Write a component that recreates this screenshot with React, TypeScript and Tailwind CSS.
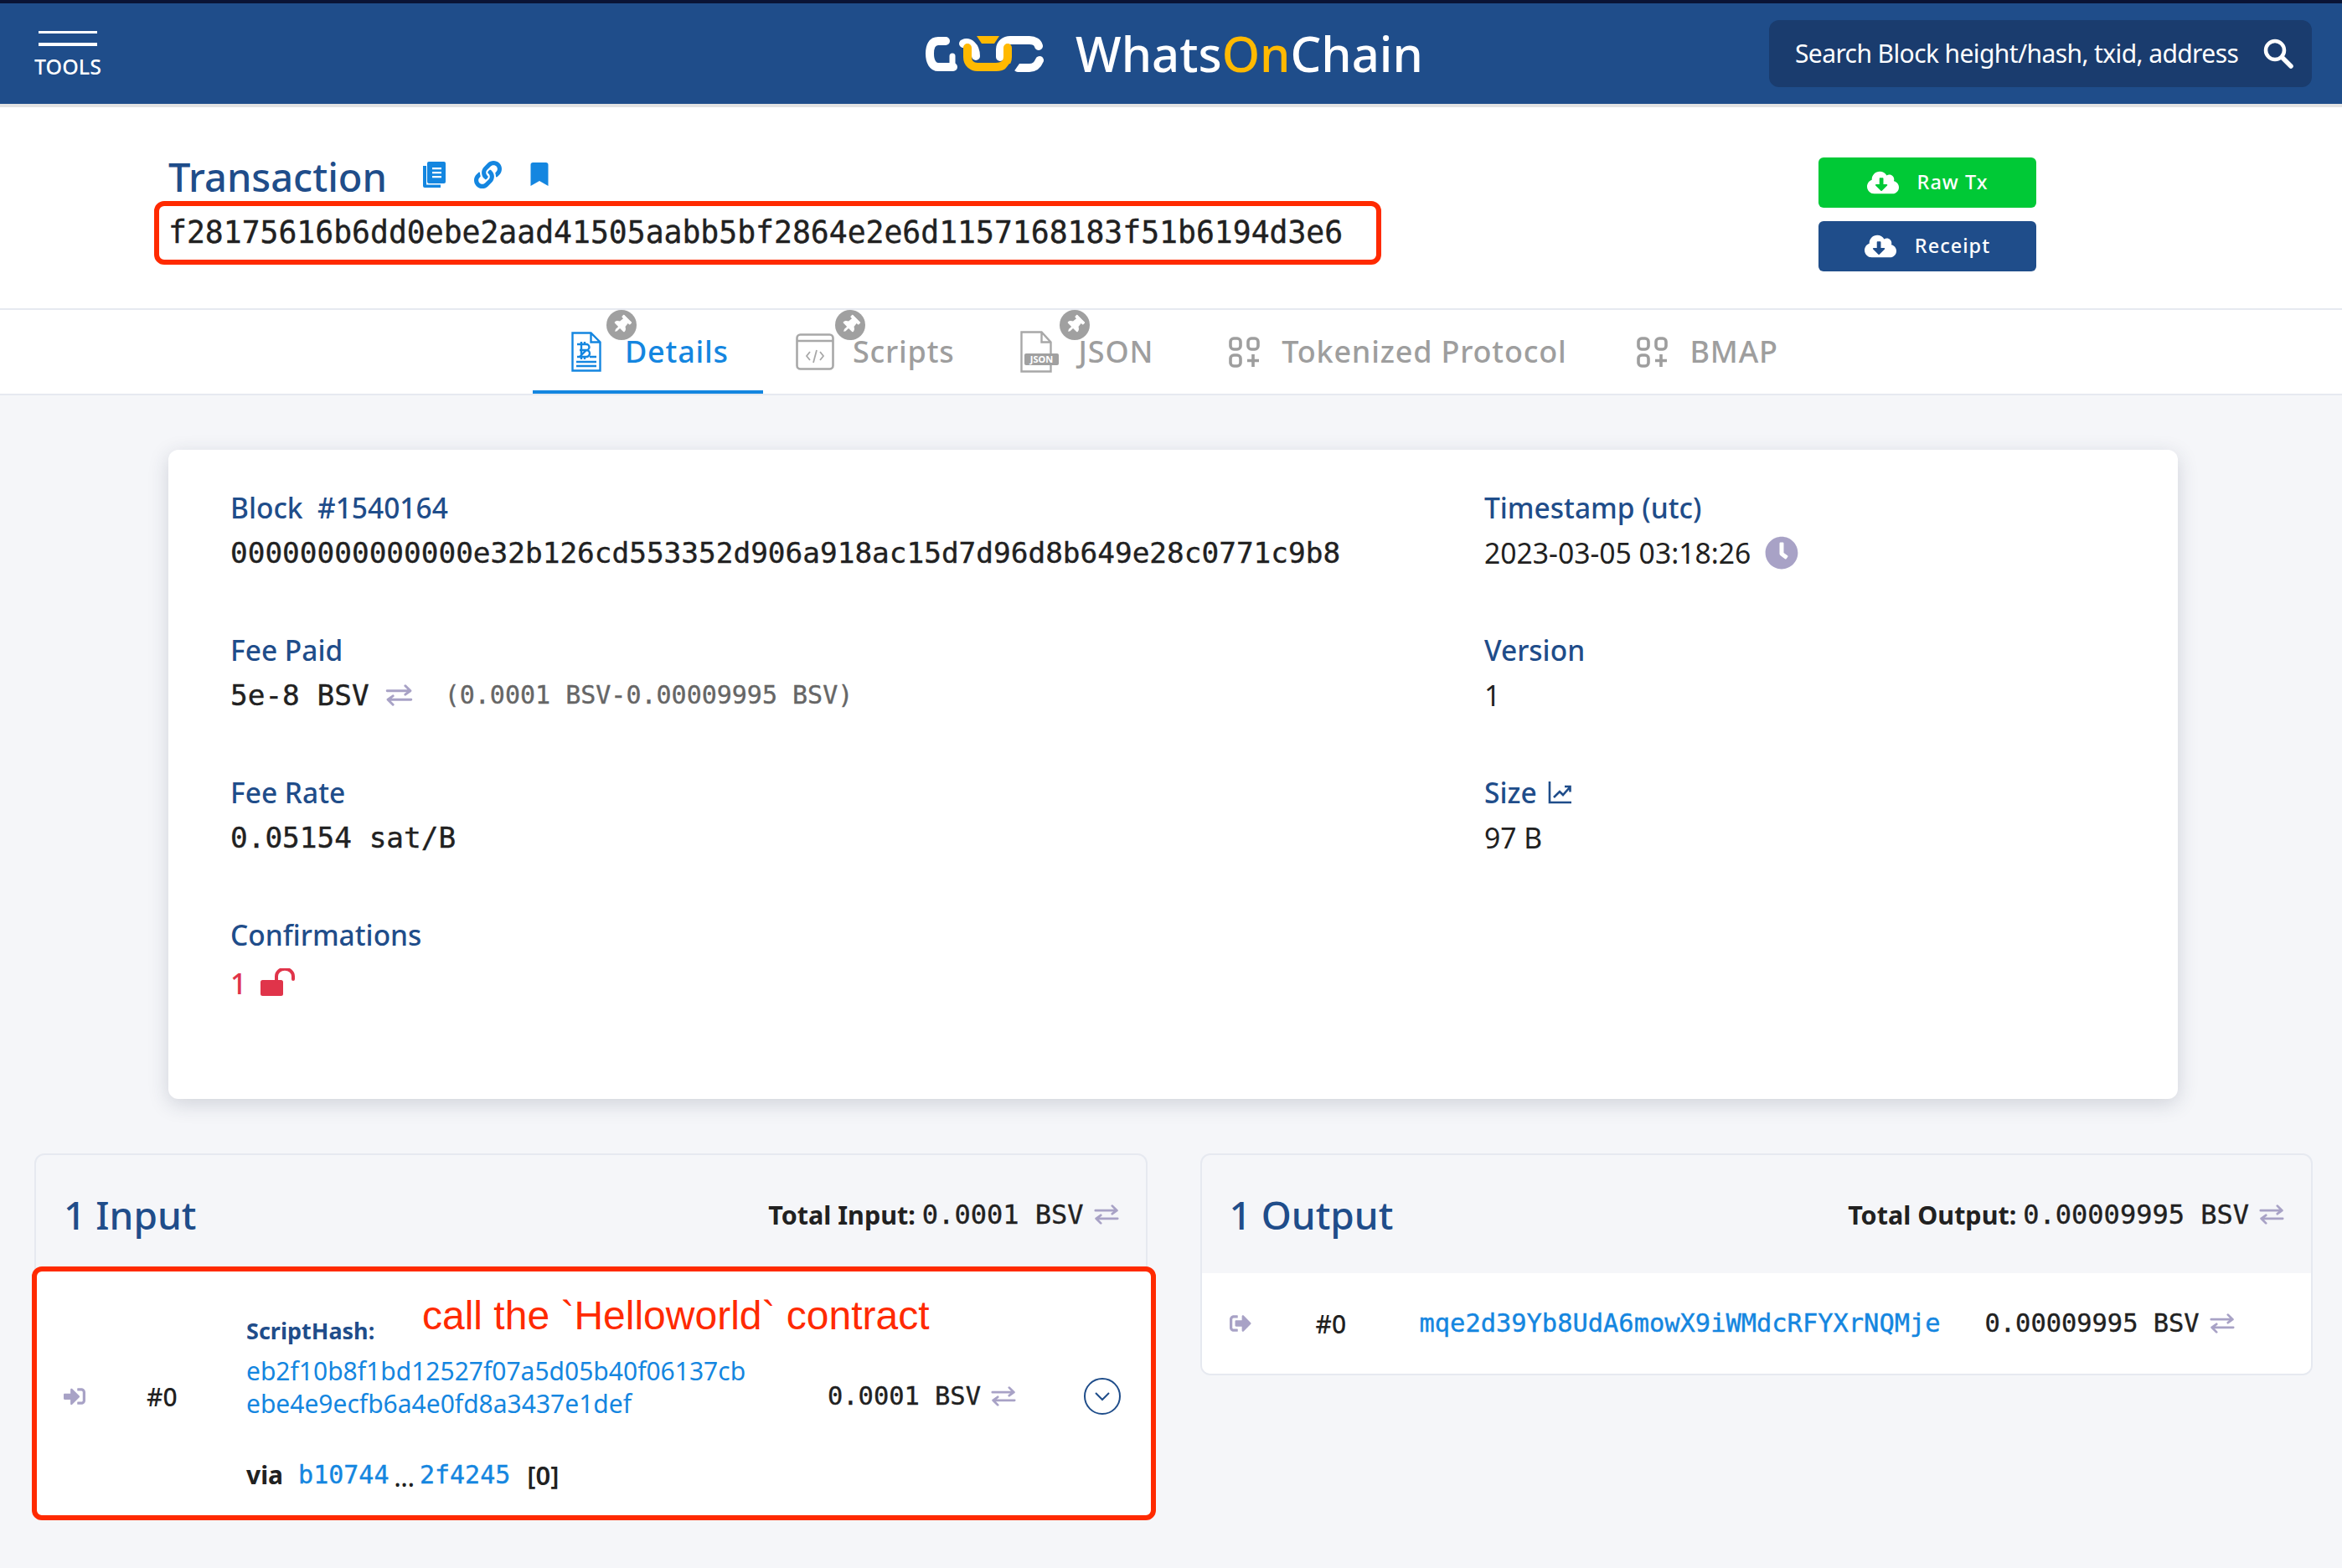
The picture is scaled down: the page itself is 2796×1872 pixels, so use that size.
import { FaBookmark, FaClock, FaCloudDownloadAlt, FaLink, FaSignInAlt, FaSignOutAlt, FaThumbtack } from "react-icons/fa";

const MONO = "font-['DejaVu_Sans_Mono',monospace] [-webkit-text-stroke:0.4px_currentColor]";

function Exchange({ className }: { className: string }) {
  return (
    <svg viewBox="0 0 37 30" fill="none" stroke="#a8a2c6" strokeWidth="3.4" strokeLinecap="round" strokeLinejoin="round" className={className}>
      <path d="M2 9h32M27 2l7 7-7 5" />
      <path d="M35 21H3M10 16l-7 5 7 7" />
    </svg>
  );
}

function CopyIcon() {
  return (
    <svg viewBox="0 0 28 32" className="w-[28px] h-[32px]" fill="#1486e0">
      <path d="M7 1a2 2 0 0 0-2 2v22a2 2 0 0 0 2 2h18a2 2 0 0 0 2-2V3a2 2 0 0 0-2-2z" />
      <path d="M0 6v24a2 2 0 0 0 2 2h19v-3.4H4V6z" />
      <path d="M11 8h11v2.2H11zM11 13h11v2.2H11zM11 18h11v2.2H11z" fill="#fff" />
    </svg>
  );
}

function Logo() {
  return (
    <svg viewBox="0 0 141 43" className="ml-[3px] w-[141px] h-[43px]" fill="none" strokeLinecap="round" strokeLinejoin="round">
      <g stroke="#fff" strokeWidth="10">
        <path d="M24 6H15C8 6 5 12 5 21C5 31 9 37 15 37H33" />
        <path d="M32 37V24" strokeWidth="7" />
        <path d="M45 9C52 6 60 12 60 24" />
        <path d="M89 25V16C89 9 95 5 101 5H124C130 5 134 8 135 12" />
        <path d="M110 38H124C130 38 134 34 136 29" />
      </g>
      <path d="M61 0H88L82 9H67Z" fill="#ffb900" />
      <path d="M50 15V26C50 34 56 38 62 38H84C92 38 98 34 98 26V15" transform="translate(0 -1)" stroke="#ffb900" strokeWidth="10" />
      <path d="M92 43H105L112 33H100Z" fill="#1f4d8a" />
    </svg>
  );
}

function Field({ label, children }: { label: React.ReactNode; children: React.ReactNode }) {
  return (
    <div className="h-[170px]">
      <div className="flex items-center gap-[13px] whitespace-pre text-[33.5px] leading-[40px] font-medium text-[#1f4d8a]">{label}</div>
      <div className="mt-[14px] flex items-center text-[33.7px] leading-[40px] text-[#212121]">{children}</div>
    </div>
  );
}

function Tab({ icon, label, pad, active, pin }: { icon: React.ReactNode; label: string; pad: string; active?: boolean; pin?: string }) {
  return (
    <div className={`relative flex h-[100px] items-center pt-[4px] border-b-[4px] ${pad} ${active ? "border-[#1486e0] text-[#1486e0]" : "border-transparent text-[#9e9e9e]"}`}>
      {icon}
      <span className="text-[36px] leading-[50px] font-medium tracking-[0.8px]">{label}</span>
      {pin && (
        <span className={`absolute top-0 flex h-[36px] w-[36px] items-center justify-center rounded-full bg-[#a0a0a0] text-white ${pin}`}>
          <FaThumbtack className="h-[22px] w-[22px] rotate-45" />
        </span>
      )}
    </div>
  );
}

function AppsIcon({ className }: { className: string }) {
  return (
    <svg viewBox="0 0 37 37" className={`h-[37px] w-[37px] ${className}`} fill="none" stroke="#9e9e9e" strokeWidth="3.6">
      <rect x="2" y="2" width="12" height="13" rx="4" />
      <rect x="23" y="2" width="12" height="13" rx="4" />
      <rect x="2" y="22" width="12" height="13" rx="4" />
      <path d="M29 21v15M22 28.500h14" />
    </svg>
  );
}

function PanelHead({ title, total, amount }: { title: string; total: string; amount: string }) {
  return (
    <div className="flex h-[141px] items-center justify-between pl-[33px] pr-[32px]">
      <h2 className="text-[46px] font-medium leading-[60px] text-[#1f4d8a]">{title}</h2>
      <div className="flex items-center text-[30.500px] leading-[40px] text-[#212121]">
        <span className="font-bold">{total}</span>
        <span className={`ml-[8px] ${MONO} text-[32px]`}>{amount}</span>
        <Exchange className="ml-[12px] h-[24px] w-[30px]" />
      </div>
    </div>
  );
}

export default function App() {
  return (
    <div className="min-h-[1872px] w-full bg-[#f5f6f9] font-['Noto_Sans',sans-serif]">
      {/* top bar */}
      <header className="grid h-[128px] grid-cols-[1fr_auto_1fr] items-center border-t-4 border-b-4 border-t-[#0a1435] border-b-[#e2e2e2] bg-[#1f4d8a] pl-[41px] pr-[36px] text-white">
        <div className="flex w-[80px] flex-col items-center">
          <div className="h-[3px] w-[70px] bg-white" />
          <div className="mt-[11px] h-[4px] w-[70px] bg-white" />
          <div className="mt-[11px] text-[25px] font-medium leading-[26px]">TOOLS</div>
        </div>
        <div className="flex items-center gap-[38px]">
          <Logo />
          <div className="text-[58px] leading-[70px] font-medium">
            Whats<span className="text-[#ffb900]">On</span>Chain
          </div>
        </div>
        <div className="flex justify-end">
          <div className="flex h-[80px] w-[648px] items-center justify-between rounded-[12px] bg-[#1a3c6e] pl-[31px] pr-[22px]">
            <span className="whitespace-nowrap pb-[2px] text-[30px] tracking-[-0.6px]">Search Block height/hash, txid, address</span>
            <svg viewBox="0 0 36 36" className="h-[36px] w-[36px]" fill="none" stroke="#fff" strokeLinecap="round">
              <circle cx="14" cy="14" r="11" strokeWidth="4.500" />
              <path d="M22.500 22.500L33 33" strokeWidth="5.500" />
            </svg>
          </div>
        </div>
      </header>

      {/* title */}
      <section className="flex h-[242px] items-start justify-between border-b-2 border-[#e6e9f0] bg-white pl-[201px] pr-[365px]">
        <div>
          <div className="mt-[54px] flex h-[58px] items-center">
            <h1 className="text-[47px] font-medium leading-[58px] text-[#1f4d8a]">Transaction</h1>
            <div className="ml-[43px] flex items-center gap-[33px] pb-[6px]">
              <CopyIcon />
              <FaLink className="h-[33px] w-[33px] text-[#1486e0]" />
              <FaBookmark className="h-[28px] w-[24px] text-[#1486e0]" />
            </div>
          </div>
          <div className={`-ml-[17px] flex h-[76px] w-[1465px] items-center rounded-[12px] border-[6px] border-[#ff2a00] pl-[11px] text-[36.4px] text-[#212121] ${MONO}`}>
            f28175616b6dd0ebe2aad41505aabb5bf2864e2e6d1157168183f51b6194d3e6
          </div>
        </div>
        <div className="mt-[60px] flex w-[260px] flex-col gap-[16px] text-[23.5px] font-medium tracking-[1px] text-white">
          <div className="flex h-[60px] items-center justify-center gap-[22px] rounded-[6px] bg-[#00c936]">
            <FaCloudDownloadAlt className="h-[34px] w-[38px]" />
            Raw Tx
          </div>
          <div className="flex h-[60px] items-center justify-center gap-[22px] rounded-[6px] bg-[#1f4d8a]">
            <FaCloudDownloadAlt className="h-[34px] w-[38px]" />
            Receipt
          </div>
        </div>
      </section>

      {/* tabs */}
      <nav className="flex h-[102px] border-b-2 border-[#e6e9f0] bg-white pl-[636px]">
        <Tab
          active
          pad="pl-[46px] pr-[41px]"
          pin="left-[88px]"
          label="Details"
          icon={
            <svg viewBox="0 0 36 48" className="mr-[28px] h-[48px] w-[36px]" fill="none" stroke="#1486e0" strokeWidth="2.4">
              <path d="M1.500 1.500h22l11 11v34h-33zM23.500 1.500v11h11" />
              <path d="M6 36h24M6 41h24M22 30h8" strokeWidth="2.600" />
              <path d="M10 15h8a3.500 3.500 0 0 1 0 7h-8m8 0a3.500 3.500 0 0 1 0 8h-8zM12 12v21M16 12v3M16 30v3M7 15h3M7 30h3" strokeWidth="2.400" />
            </svg>
          }
        />
        <Tab
          pad="pl-[39px] pr-[39px]"
          pin="left-[86px]"
          label="Scripts"
          icon={
            <svg viewBox="0 0 46 44" className="mr-[22px] h-[44px] w-[46px]" fill="none" stroke="#a8a8a8" strokeWidth="2.6">
              <rect x="1.500" y="1.500" width="43" height="41" rx="4" />
              <path d="M1.500 9h43" />
              <path d="M17 22l-4 5 4 5M29 22l4 5-4 5M25 20l-4 15" strokeWidth="1.800" />
            </svg>
          }
        />
        <Tab
          pad="pl-[39px] pr-[47px]"
          pin="left-[86px]"
          label="JSON"
          icon={
            <svg viewBox="0 0 46 50" className="mr-[24px] h-[50px] w-[46px]" fill="none" stroke="#a8a8a8" strokeWidth="2.4">
              <path d="M1.500 1.500h24l11 12v35h-35zM25.500 1.500v12h11" />
              <rect x="5" y="27" width="41" height="14" rx="2" fill="#a0a0a0" stroke="none" />
              <text x="25.500" y="38" textAnchor="middle" fontSize="11" fontWeight="700" fill="#fff" stroke="none">JSON</text>
            </svg>
          }
        />
        <Tab pad="pl-[43px] pr-[40px]" label="Tokenized Protocol" icon={<AppsIcon className="mr-[26px]" />} />
        <Tab pad="px-[43px]" label="BMAP" icon={<AppsIcon className="mr-[27px]" />} />
      </nav>

      {/* details card */}
      <main className="pl-[201px] pr-[196px] pt-[65px]">
        <div className="grid h-[775px] grid-cols-[1497px_1fr] rounded-[12px] bg-white pl-[74px] pt-[49px] shadow-[0_6px_24px_rgba(40,50,80,0.18)]">
          <div>
            <Field label="Block  #1540164">
              <span className={`${MONO} text-[34.4px]`}>00000000000000e32b126cd553352d906a918ac15d7d96d8b649e28c0771c9b8</span>
            </Field>
            <Field label="Fee Paid">
              <span className={`${MONO} text-[34.4px] whitespace-pre`}>5e-8 BSV</span>
              <Exchange className="ml-[17px] h-[26px] w-[37px]" />
              <span className={`ml-[36px] ${MONO} text-[30px] text-[#666666] whitespace-pre`}>(0.0001 BSV-0.00009995 BSV)</span>
            </Field>
            <Field label="Fee Rate">
              <span className={`${MONO} text-[34.4px]`}>0.05154 sat/B</span>
            </Field>
            <Field label="Confirmations">
              <span className="pt-[4px] text-[34px] font-medium text-[#e0344a]">1</span>
              <svg viewBox="0 0 41 33" className="ml-[17px] h-[33px] w-[41px]" fill="none">
                <rect x="0" y="14" width="27" height="19" rx="2.500" fill="#e0344a" />
                <path d="M19 15V9.500a8.500 7.500 0 0 1 20 0V13" stroke="#e0344a" strokeWidth="4" strokeLinecap="round" />
              </svg>
            </Field>
          </div>
          <div>
            <Field label="Timestamp (utc)">
              2023-03-05 03:18:26
              <FaClock className="ml-[17px] h-[40px] w-[40px] text-[#a8a2c6]" />
            </Field>
            <Field label="Version">1</Field>
            <Field
              label={
                <>
                  Size
                  <svg viewBox="0 0 28 28" className="h-[28px] w-[28px]" fill="none" stroke="#1f4d8a" strokeWidth="2.600">
                    <path d="M2 1v25h26" />
                    <path d="M7 20l7-7 4 4 8-9M20 7h6.500v6.500" />
                  </svg>
                </>
              }
            >
              97 B
            </Field>
          </div>
        </div>
      </main>

      {/* inputs and outputs */}
      <div className="grid grid-cols-2 items-start gap-[63px] pl-[41px] pr-[35px] pt-[65px]">
        <div className="rounded-[12px] border-2 border-[#e6e9f0]">
          <PanelHead title="1 Input" total="Total Input:" amount="0.0001 BSV" />
          <div className="relative -mb-[3px] -ml-[5px] -mr-[12px] -mt-[8px] flex h-[303px] items-center rounded-[12px] border-[6px] border-[#ff2a00] bg-white pt-[7px]">
            <span className="absolute left-[460px] top-[25px] whitespace-pre font-['Liberation_Sans',sans-serif] text-[48px] leading-[56px] text-[#ff2a00]">call the `Helloworld` contract</span>
            <FaSignInAlt className="ml-[30px] h-[26px] w-[30px] text-[#a8a2c6]" />
            <div className="ml-[71px] w-[119px] text-[30px] font-medium text-[#212121]">#0</div>
            <div className="w-[694px] self-start pt-[44px]">
              <div className="text-[27px] font-bold leading-[40px] text-[#1f4d8a]">ScriptHash:</div>
              <div className="mt-[8px] text-[30px] leading-[39px] text-[#1486e0]">
                eb2f10b8f1bd12527f07a5d05b40f06137cb
                <br />
                ebe4e9ecfb6a4e0fd8a3437e1def
              </div>
              <div className="mt-[43px] flex items-center text-[30px] leading-[40px] text-[#212121]">
                <span className="font-bold">via</span>
                <span className={`ml-[18px] text-[#1486e0] ${MONO} text-[30px]`}>b10744</span>
                <span className="mx-[6px] mt-[6px] font-medium">...</span>
                <span className={`text-[#1486e0] ${MONO} text-[30px]`}>2f4245</span>
                <span className="ml-[20px] text-[31px] font-semibold">[0]</span>
              </div>
            </div>
            <span className={`${MONO} text-[30.400px] text-[#212121]`}>0.0001 BSV</span>
            <Exchange className="ml-[12px] h-[24px] w-[30px]" />
            <div className="ml-auto mr-[36px] flex h-[44px] w-[44px] items-center justify-center rounded-full border-2 border-[#1f4d8a]">
              <svg viewBox="0 0 20 12" className="h-[12px] w-[20px]" fill="none" stroke="#1f4d8a" strokeWidth="2">
                <path d="M2 2l8 8 8-8" />
              </svg>
            </div>
          </div>
        </div>
        <div className="overflow-hidden rounded-[12px] border-2 border-[#e6e9f0]">
          <PanelHead title="1 Output" total="Total Output:" amount="0.00009995 BSV" />
          <div className="flex h-[120px] items-center bg-white pl-[31px] text-[#212121]">
            <FaSignOutAlt className="h-[26px] w-[30px] text-[#a8a2c6]" />
            <div className="ml-[75px] w-[124px] text-[30px] font-medium">#0</div>
            <span className={`w-[675px] ${MONO} text-[30.400px] text-[#1486e0]`}>mqe2d39Yb8UdA6mowX9iWMdcRFYXrNQMje</span>
            <span className={`${MONO} text-[30.400px]`}>0.00009995 BSV</span>
            <Exchange className="ml-[12px] h-[24px] w-[30px]" />
          </div>
        </div>
      </div>
    </div>
  );
}
